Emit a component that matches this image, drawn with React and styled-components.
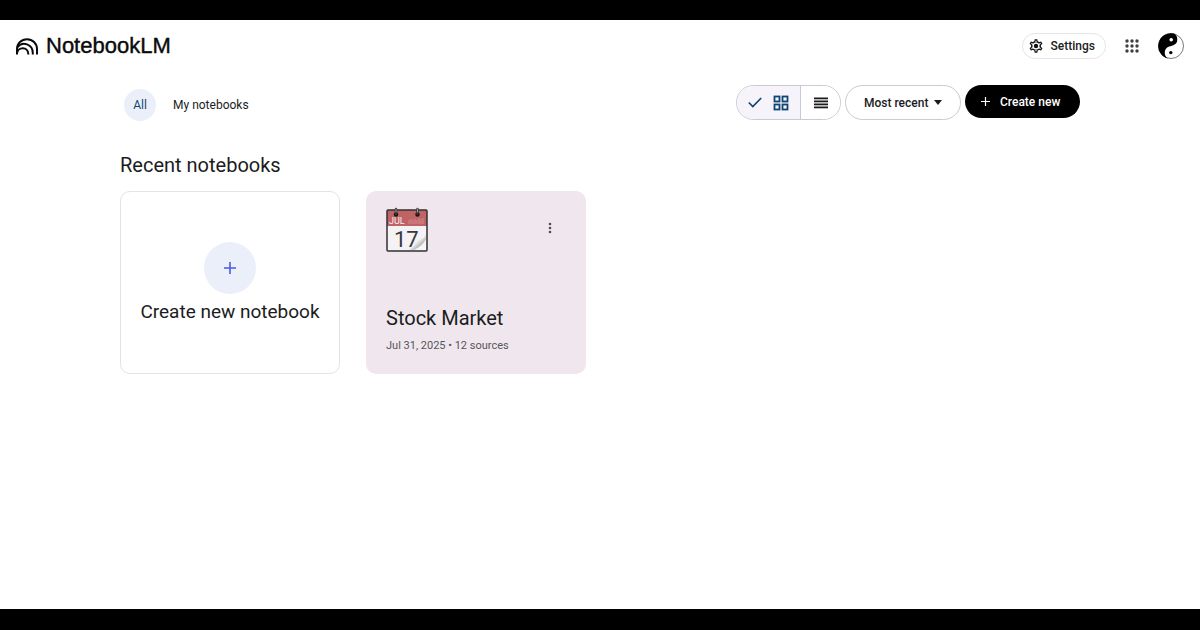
import React from "react";
import styled, { createGlobalStyle } from "styled-components";

const GlobalStyle = createGlobalStyle`
  * { box-sizing: border-box; }
  body { margin: 0; background: #000; font-family: Roboto, "Liberation Sans", sans-serif; color: #1b1c1d; }
  button, select { font-family: inherit; color: inherit; cursor: pointer; }
  svg { display: block; flex: none; }
`;

const Frame = styled.div`
  min-height: 100vh;
  padding: 20px 0 21px;
  background: #000;
  display: flex;
  flex-direction: column;
`;

const Page = styled.div`
  flex: 1;
  background: #fff;
`;

const Header = styled.header`
  display: flex;
  align-items: center;
  justify-content: space-between;
  height: 52px;
  padding: 0 16px;
`;

const Brand = styled.a`
  display: flex;
  align-items: center;
  gap: 8px;
  font-family: "Liberation Sans", sans-serif;
  font-size: 22px;
  font-weight: 400;
  -webkit-text-stroke: 0.4px #0a0a0a;
  line-height: 28px;
  color: #0a0a0a;
  text-decoration: none;
`;

const HeaderActions = styled.div`
  display: flex;
  align-items: center;
  gap: 12px;
`;

const SettingsButton = styled.button`
  display: flex;
  align-items: center;
  gap: 8px;
  height: 26px;
  padding: 0 10px 0 6px;
  border: 1px solid #e6e6e8;
  border-radius: 13px;
  background: #fff;
  font-size: 12px;
  font-weight: 500;
`;

const IconButton = styled.button`
  display: flex;
  align-items: center;
  justify-content: center;
  width: ${(p) => p.$size}px;
  height: ${(p) => p.$size}px;
  padding: 0;
  border: 0;
  border-radius: 50%;
  background: transparent;
`;

const Main = styled.main`
  padding: 13px 120px 0;
`;

const Toolbar = styled.div`
  display: flex;
  align-items: flex-start;
  justify-content: space-between;
`;

const Filters = styled.nav`
  display: flex;
  align-items: center;
  gap: 8px;
  padding: 4px 4px 0;
`;

const FilterButton = styled.button`
  height: 32px;
  min-width: 32px;
  padding: 0 ${(p) => (p.$active ? 0 : 9)}px;
  border: 0;
  border-radius: 16px;
  background: ${(p) => (p.$active ? "#ebeffa" : "transparent")};
  color: ${(p) => (p.$active ? "#14466e" : "#1b1c1d")};
  font-size: 12px;
`;

const Controls = styled.div`
  display: flex;
  align-items: flex-start;
  gap: 4px;
`;

const ViewToggle = styled.div`
  display: flex;
  height: 35px;
  border: 1px solid #c8cbd2;
  border-radius: 18px;
  overflow: hidden;
`;

const ViewButton = styled.button`
  display: flex;
  align-items: center;
  justify-content: center;
  gap: 11px;
  width: ${(p) => (p.$active ? 64 : 39)}px;
  padding: 0;
  border: 0;
  border-right: ${(p) => (p.$active ? "1px solid #c3cadc" : "0")};
  background: ${(p) => (p.$active ? "#f6f4fa" : "#fff")};
`;

const SortField = styled.label`
  position: relative;
  display: flex;
  height: 35px;
`;

const SortSelect = styled.select`
  appearance: none;
  width: 116px;
  padding: 0 0 0 18px;
  border: 1px solid #c8cbd0;
  border-radius: 18px;
  background: #fff;
  font-size: 12px;
  font-weight: 500;
`;

const SortArrow = styled.svg`
  position: absolute;
  right: 19px;
  top: 15px;
  pointer-events: none;
`;

const CreateButton = styled.button`
  display: flex;
  align-items: center;
  gap: 10px;
  width: 115px;
  height: 33px;
  padding: 0 0 0 16px;
  border: 0;
  border-radius: 17px;
  background: #000;
  && { color: #fff; }
  font-size: 12px;
  font-weight: 500;
`;

const SectionTitle = styled.h1`
  margin: 30px 0 12px;
  font-size: 20px;
  font-weight: 400;
  line-height: 28px;
`;

const CardGrid = styled.div`
  display: grid;
  grid-template-columns: repeat(auto-fill, 220px);
  grid-auto-rows: 183px;
  gap: 26px;
`;

const NewCard = styled.button`
  display: flex;
  flex-direction: column;
  align-items: center;
  padding: 50px 0 0;
  border: 1px solid #e2e2e8;
  border-radius: 10px;
  background: #fff;
  font-size: 19px;
  line-height: 24px;
`;

const PlusCircle = styled.span`
  display: flex;
  align-items: center;
  justify-content: center;
  width: 52px;
  height: 52px;
  margin-bottom: 6px;
  border-radius: 50%;
  background: #ebeffa;
`;

const NotebookCard = styled.article`
  display: flex;
  flex-direction: column;
  justify-content: space-between;
  padding: 16px 20px 20px;
  border-radius: 10px;
  background: #f0e7ee;
`;

const CardTop = styled.div`
  display: flex;
  align-items: flex-start;
  justify-content: space-between;
  padding-right: 3px;
`;

const MenuSlot = styled.div`
  padding-top: 8px;
`;

const NotebookTitle = styled.h2`
  margin: 0 0 8px;
  font-size: 20px;
  font-weight: 400;
  line-height: 24px;
`;

const NotebookMeta = styled.p`
  margin: 0;
  font-size: 11px;
  line-height: 16px;
  color: #55565b;
`;

const CardLink = styled.a`
  color: inherit;
  text-decoration: none;
`;

const Plus = ({ size, color, width }) => (
  <svg width={size} height={size} viewBox="0 0 12 12" aria-hidden="true">
    <path d="M6 0v12M0 6h12" stroke={color} strokeWidth={width} />
  </svg>
);

const Logo = () => (
  <svg width="22" height="17" viewBox="0 0 22 17" fill="none" stroke="#0a0a0a" strokeWidth="2" aria-hidden="true">
    <path d="M1 16.500V11a10 9.800 0 0 1 20 0v5.500" />
    <path d="M1.500 9.200C6.500 2.800 16.800 6 16.800 15v1.500" />
    <path d="M1 15.500C1.500 8.500 12.300 8.300 12.300 16v.5" />
  </svg>
);

const teeth = [0, 60, 120, 180, 240, 300];

const Gear = () => (
  <svg width="14" height="14" viewBox="0 0 14 14" fill="none" stroke="#111" aria-hidden="true">
    <g fill="#111" stroke="none">
      {teeth.map((a) => (
        <path key={a} d="M5.200 2.800 5.700.3h2.600l.5 2.500z" transform={`rotate(${a} 7 7)`} />
      ))}
    </g>
    <circle cx="7" cy="7" r="4.300" fill="#fff" strokeWidth="1.500" />
    <g fill="#fff" stroke="none">
      {teeth.map((a) => (
        <path key={a} d="M6.300 3.600 6.700 1.500h.6l.4 2.100z" transform={`rotate(${a} 7 7)`} />
      ))}
    </g>
    <circle cx="7" cy="7" r="2.200" fill="#111" stroke="none" />
  </svg>
);

const AppsIcon = () => (
  <svg width="14" height="14" viewBox="0 0 14 14" fill="#3c4043" aria-hidden="true">
    {[2, 7, 12].map((y) => [2, 7, 12].map((x) => <circle key={x + "-" + y} cx={x} cy={y} r="1.700" />))}
  </svg>
);

const YinYang = () => (
  <svg width="26" height="26" viewBox="0 0 26 26" aria-hidden="true">
    <circle cx="13" cy="13" r="12.500" fill="#fff" stroke="#555" strokeWidth=".8" />
    <path d="M16 .6A12.700 12.700 0 1 0 10 25.400C5.500 23 5.500 15.500 11 13.600 15 12.600 19.500 11.500 19.300 6.500 19.300 3.500 18 1.500 16 .6z" fill="#000" />
    <circle cx="13.200" cy="6.700" r="1.800" fill="#fff" />
    <circle cx="12.800" cy="19.600" r="1.700" fill="#000" />
  </svg>
);

const Check = () => (
  <svg width="14" height="11" viewBox="0 0 14 11" fill="none" stroke="#0d4674" strokeWidth="1.700" aria-hidden="true">
    <path d="M.8 5.500 4.800 9.600 13.200 1" />
  </svg>
);

const GridIcon = () => (
  <svg width="16" height="16" viewBox="0 0 16 16" fill="none" stroke="#0d4674" strokeWidth="1.800" aria-hidden="true">
    {[1.5, 9.5].map((y) => [1.5, 9.5].map((x) => <rect key={x + "-" + y} x={x} y={y} width="5" height="5" />))}
  </svg>
);

const ListIcon = () => (
  <svg width="14" height="12" viewBox="0 0 14 12" fill="#1b1c1d" aria-hidden="true">
    {[0, 3, 6, 9].map((y) => <rect key={y} y={y + 0.5} width="14" height="1.800" />)}
  </svg>
);

const Dots = () => (
  <svg width="4" height="12" viewBox="0 0 4 12" fill="#4a4c55" aria-hidden="true">
    {[2, 6, 10].map((y) => <circle key={y} cx="2" cy={y} r="1.300" />)}
  </svg>
);

const Calendar = () => (
  <svg width="42" height="46" viewBox="0 0 42 46" role="img" aria-label="Calendar">
    <defs>
      <linearGradient id="curl" x1="0" y1="0" x2="1" y2="1">
        <stop offset=".3" stopColor="#555" />
        <stop offset=".5" stopColor="#eee" />
        <stop offset=".8" stopColor="#999" />
      </linearGradient>
    </defs>
    <rect x="1" y="3" width="40" height="41" rx="1" fill="#f4f2f4" />
    <path d="M1 3h40v16H1z" fill="#c06365" />
    <path d="M23 13v4M25 12v5M27 13v4M29 12v5M31 13v4M33 11v6M35 12v5M37 11v6" stroke="#d08a8b" />
    <text x="3" y="17" fontSize="9" fill="#fbf1f1">JUL</text>
    <text x="8" y="40" fontSize="22" fill="#39393c">17</text>
    <path d="M22 43c8-3 5-7 11-10 4-1 6-3 7-6v16z" fill="url(#curl)" />
    <path d="M28 43c6-3 10-7 12-11v11z" fill="#f7f6f7" />
    <rect x="1" y="3" width="40" height="41" rx="1" fill="none" stroke="#303033" strokeWidth="1.500" />
    <g fill="#151515">
      <circle cx="10" cy="7.500" r="2.200" />
      <circle cx="31.500" cy="7.500" r="2.200" />
    </g>
    <path d="M10 2v5M31.500 2v5" stroke="#333" strokeWidth="2.400" strokeLinecap="round" />
    <path d="M10 2v3M31.500 2v3" stroke="#bbb" strokeWidth=".8" strokeLinecap="round" />
  </svg>
);

export default function App() {
  return (
    <>
      <GlobalStyle />
      <Frame>
        <Page>
          <Header>
            <Brand href="#home"><Logo />NotebookLM</Brand>
            <HeaderActions>
              <SettingsButton type="button"><Gear />Settings</SettingsButton>
              <IconButton type="button" $size={28} aria-label="Apps"><AppsIcon /></IconButton>
              <IconButton type="button" $size={26} aria-label="Account"><YinYang /></IconButton>
            </HeaderActions>
          </Header>
          <Main>
            <Toolbar>
              <Filters aria-label="Notebook filter">
                <FilterButton type="button" $active>All</FilterButton>
                <FilterButton type="button">My notebooks</FilterButton>
              </Filters>
              <Controls>
                <ViewToggle role="group" aria-label="View">
                  <ViewButton type="button" $active aria-pressed="true" aria-label="Grid view"><Check /><GridIcon /></ViewButton>
                  <ViewButton type="button" aria-pressed="false" aria-label="List view"><ListIcon /></ViewButton>
                </ViewToggle>
                <SortField>
                  <SortSelect aria-label="Sort notebooks" defaultValue="recent">
                    <option value="recent">Most recent</option>
                  </SortSelect>
                  <SortArrow width="8" height="5" viewBox="0 0 8 5" aria-hidden="true">
                    <path d="M0 0h8L4 5z" fill="#1b1c1d" />
                  </SortArrow>
                </SortField>
                <CreateButton type="button"><Plus size={9} color="#fff" width={1.6} />Create new</CreateButton>
              </Controls>
            </Toolbar>
            <SectionTitle>Recent notebooks</SectionTitle>
            <CardGrid>
              <NewCard type="button">
                <PlusCircle><Plus size={12} color="#4b5be6" width={1.6} /></PlusCircle>
                Create new notebook
              </NewCard>
              <NotebookCard>
                <CardTop>
                  <Calendar />
                  <MenuSlot>
                    <IconButton type="button" $size={26} aria-label="Notebook menu"><Dots /></IconButton>
                  </MenuSlot>
                </CardTop>
                <div>
                  <NotebookTitle><CardLink href="#stock-market">Stock Market</CardLink></NotebookTitle>
                  <NotebookMeta>Jul 31, 2025 • 12 sources</NotebookMeta>
                </div>
              </NotebookCard>
            </CardGrid>
          </Main>
        </Page>
      </Frame>
    </>
  );
}
